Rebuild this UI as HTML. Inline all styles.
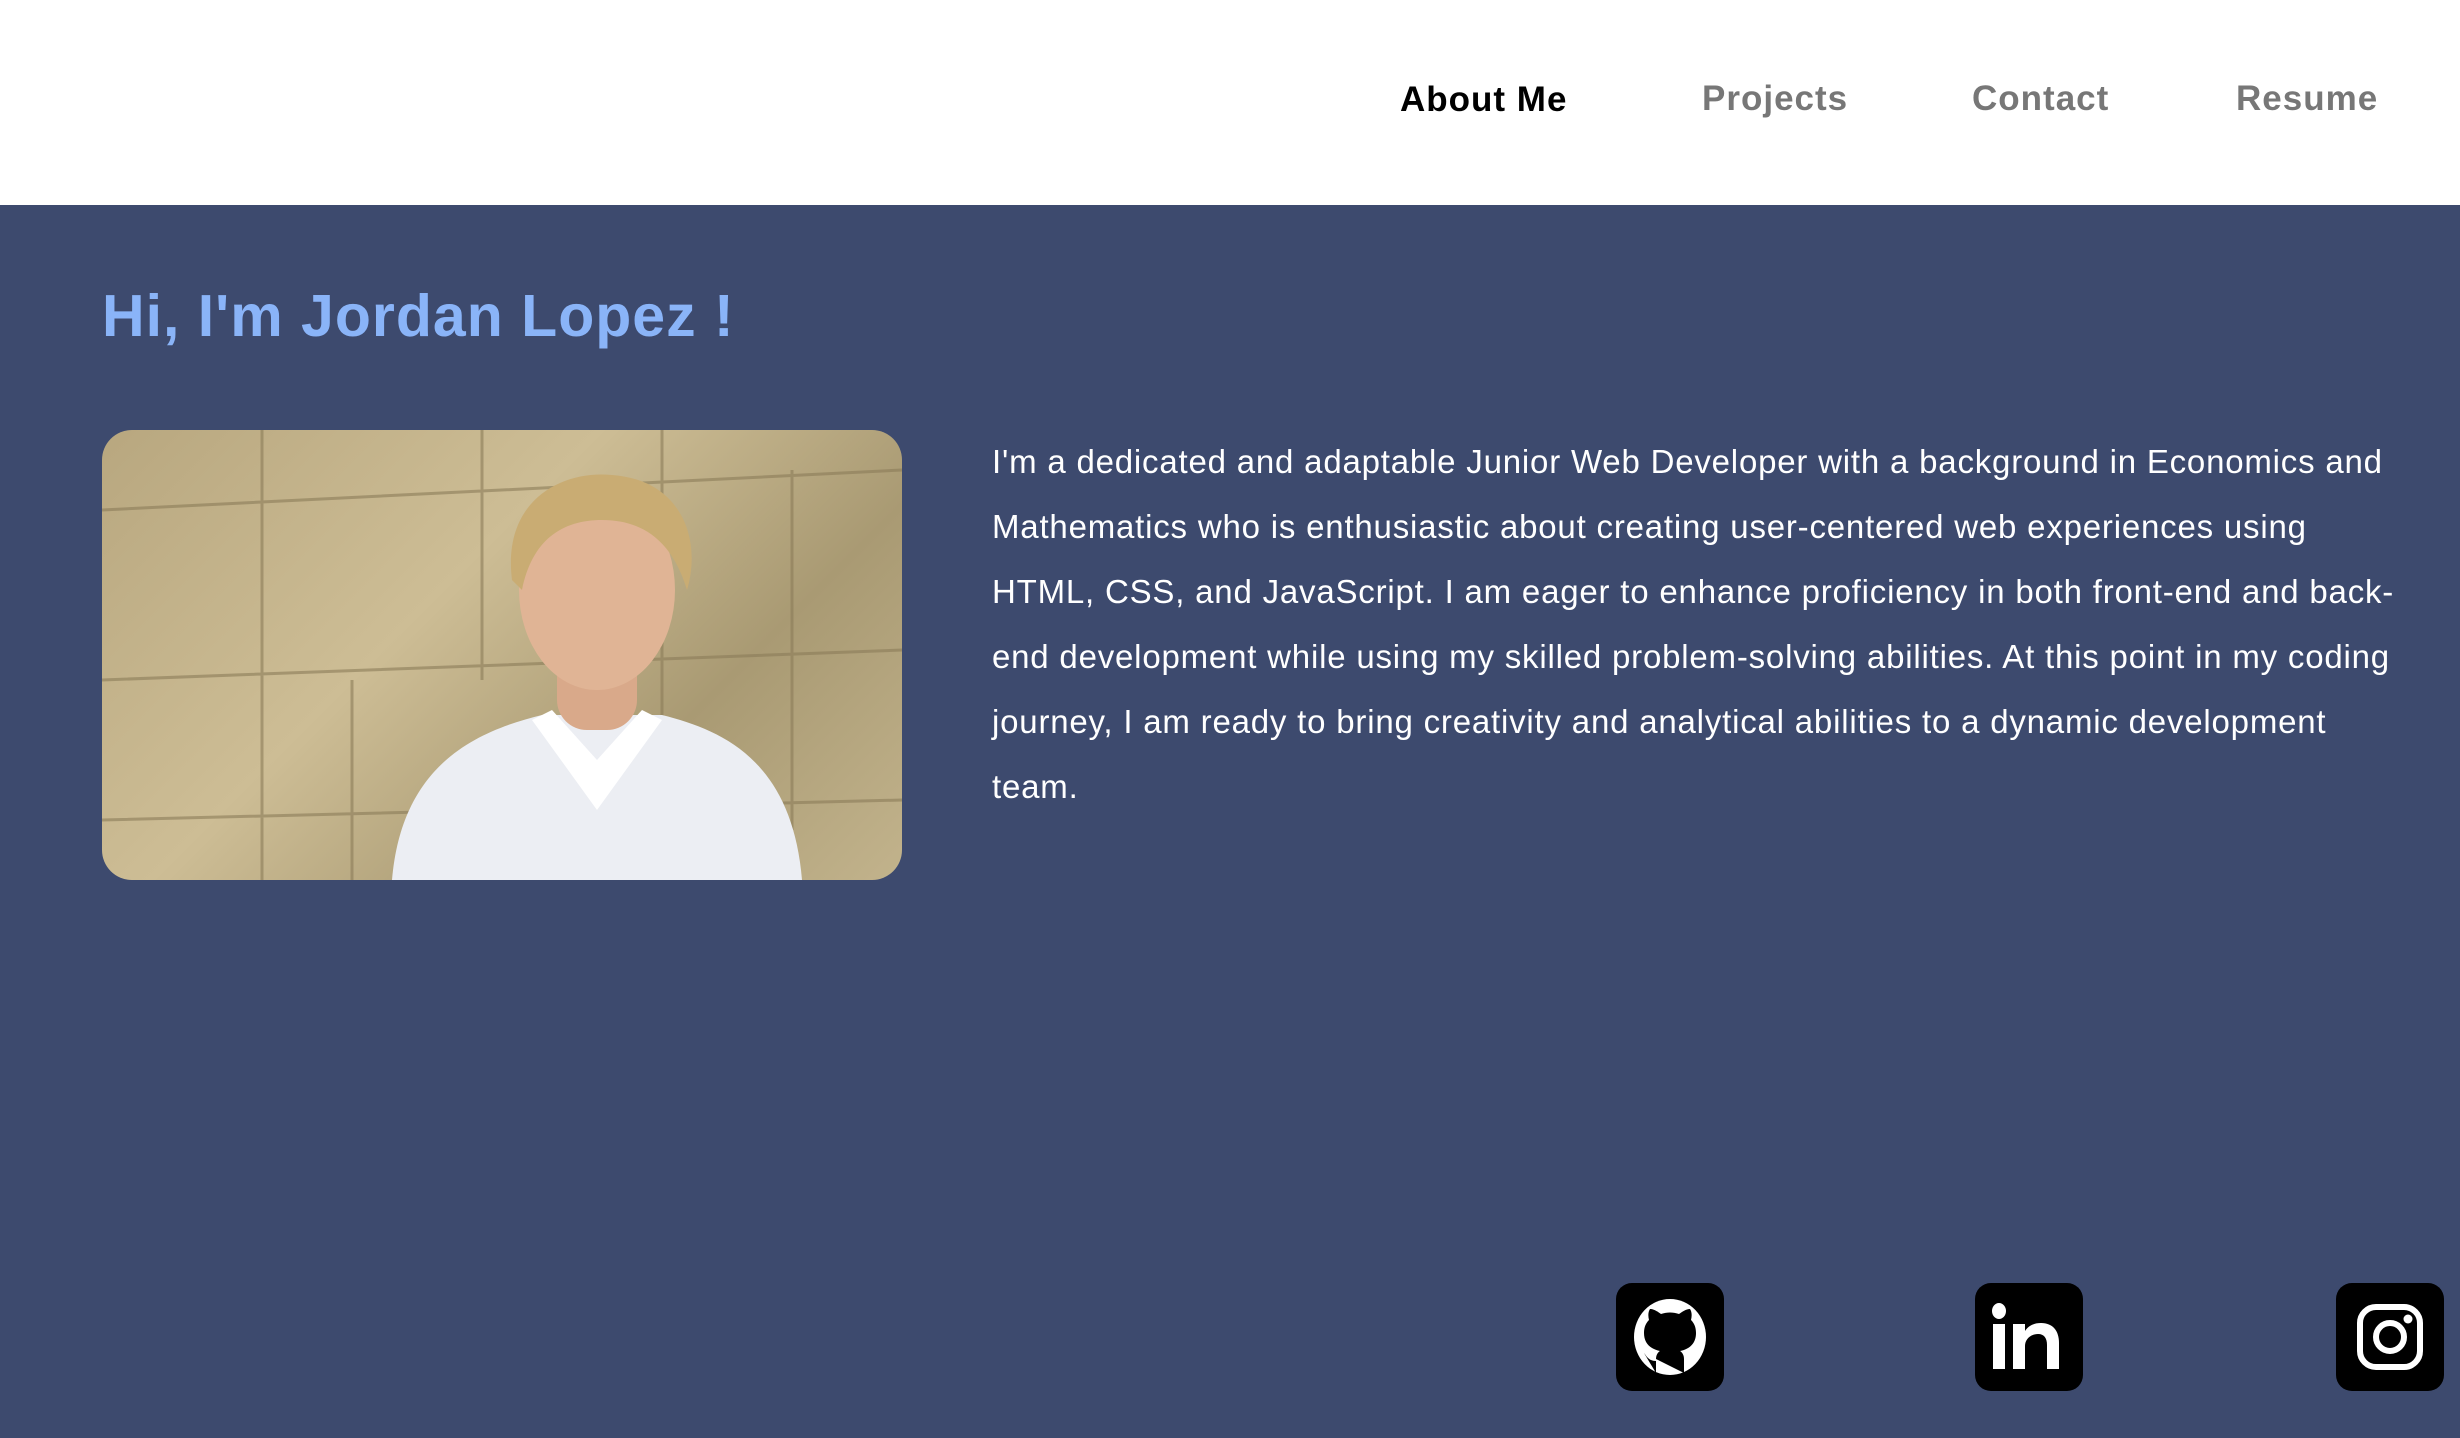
<!DOCTYPE html>
<html><head><meta charset="utf-8"><style>
*{margin:0;padding:0;box-sizing:border-box}
body{width:2460px;height:1438px;overflow:hidden;background:#3d4a6e;font-family:"Liberation Sans",sans-serif}
nav{position:absolute;left:0;top:0;width:2460px;height:205px;background:#fff}
nav a{position:absolute;top:79px;font-size:35px;font-weight:bold;letter-spacing:1px;color:#777;text-decoration:none}
h1{position:absolute;left:102px;top:282px;font-size:59px;letter-spacing:1px;color:#8ab4f8;font-weight:bold}
.photo{position:absolute;left:102px;top:430px;width:800px;height:450px;border-radius:30px;overflow:hidden;background:linear-gradient(135deg,#b8a77f,#cdbd95 40%,#a99a73 70%,#c2b38c)}
p{position:absolute;left:992px;top:429px;white-space:nowrap;font-size:33px;letter-spacing:0.8px;line-height:65px;color:#fff}
.ic{position:absolute;top:1283px;width:108px;height:108px;background:#000;border-radius:16px}
</style></head><body>
<nav>
<a style="left:1400px;top:80px;color:#000">About Me</a>
<a style="left:1702px">Projects</a>
<a style="left:1972px">Contact</a>
<a style="left:2236px">Resume</a>
</nav>
<h1>Hi, I'm Jordan Lopez !</h1>
<div class="photo">
<svg width="800" height="450" viewBox="0 0 800 450">
<g stroke="#8a7c58" stroke-width="3" fill="none" opacity=".6">
<path d="M0 80L800 40M0 250L800 220M0 390L800 370M160 0V450M380 0V250M560 0V450M250 250V450M690 40V400"/>
</g>
<path d="M290 450C300 330 380 300 440 285L560 285C620 300 690 330 700 450Z" fill="#eceef3"/>
<rect x="455" y="200" width="80" height="100" rx="30" fill="#d9a98a"/>
<ellipse cx="495" cy="160" rx="78" ry="100" fill="#e0b495"/>
<path d="M410 150C400 70 460 40 510 45C580 50 600 110 585 160C570 110 540 90 500 90C460 90 430 110 420 160Z" fill="#c9ac73"/>
<path d="M430 290L495 380L560 290L540 280L495 330L450 280Z" fill="#fff"/>
</svg>
</div>
<p>I'm a dedicated and adaptable Junior Web Developer with a background in Economics and<br>Mathematics who is enthusiastic about creating user-centered web experiences using<br>HTML, CSS, and JavaScript. I am eager to enhance proficiency in both front-end and back-<br>end development while using my skilled problem-solving abilities. At this point in my coding<br>journey, I am ready to bring creativity and analytical abilities to a dynamic development<br>team.</p>
<div class="ic" style="left:1616px"><svg width="108" height="108" viewBox="0 0 108 108"><ellipse cx="54" cy="54" rx="36" ry="38" fill="#fff"/><path d="M40 90V78C32 78 30 72 28 70M68 90V76C68 70 64 68 64 68C74 66 80 60 80 50C80 44 78 40 75 37C76 33 76 29 74 26C70 26 66 29 63 31C57 29 51 29 45 31C42 29 38 26 34 26C32 29 32 33 33 37C30 40 28 44 28 50C28 60 34 66 44 68C44 68 40 70 40 76" fill="#000"/></svg></div>
<div class="ic" style="left:1975px"><svg width="108" height="108" viewBox="0 0 108 108"><ellipse cx="24" cy="28" rx="7" ry="8" fill="#fff"/><rect x="18" y="41" width="12" height="45" fill="#fff"/><path d="M38 41H50V48C54 42 60 40 66 40C78 40 84 48 84 60V86H72V62C72 55 69 51 63 51C56 51 50 56 50 63V86H38Z" fill="#fff"/></svg></div>
<div class="ic" style="left:2336px"><svg width="108" height="108" viewBox="0 0 108 108"><rect x="24" y="24" width="60" height="60" rx="16" fill="none" stroke="#fff" stroke-width="6"/><circle cx="54" cy="54" r="14" fill="none" stroke="#fff" stroke-width="6"/><circle cx="72" cy="36" r="4.5" fill="#fff"/></svg></div>
</body></html>
